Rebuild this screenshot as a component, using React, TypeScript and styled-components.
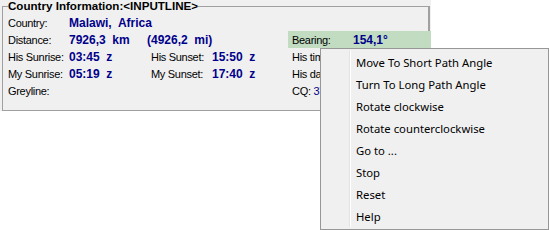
import React from "react";
import styled, { createGlobalStyle } from "styled-components";

const GlobalStyle = createGlobalStyle`
  html, body {
    margin: 0;
    padding: 0;
    background: #ffffff;
  }
  body {
    width: 549px;
    height: 230px;
    overflow: hidden;
    font-family: "Liberation Sans", Arial, sans-serif;
  }
`;

const Screen = styled.div`
  position: relative;
  width: 549px;
  height: 230px;
`;

const Panel = styled.div`
  width: 431px;
  height: 111px;
  background: #f0f0f0;
  box-sizing: border-box;
  padding-left: 2px;
`;

const GroupBox = styled.fieldset`
  margin: 0;
  width: 428px;
  height: 111px;
  box-sizing: border-box;
  padding: 2px 0 0 5px;
  border: 1px solid #a0a0a0;
  border-right-width: 2px;
  min-width: 0;
`;

const Title = styled.legend`
  padding: 0;
  margin: 0;
  font-size: 11.6px;
  line-height: 12px;
  font-weight: bold;
  color: #000000;
  white-space: pre;
`;

const InfoGrid = styled.div`
  display: grid;
  grid-template-columns: 61px 78px 65px 76px 1fr;
  grid-auto-rows: 17px;
  font-size: 11px;
  letter-spacing: -0.3px;
`;

const Label = styled.div<{ $indent?: number }>`
  display: flex;
  align-items: center;
  padding-left: ${({ $indent }) => $indent ?? 0}px;
  color: #000000;
  white-space: pre;
  overflow: hidden;
`;

const Value = styled.div<{ $span?: number }>`
  display: flex;
  align-items: center;
  grid-column: span ${({ $span }) => $span ?? 1};
  font-size: 12px;
  font-weight: bold;
  letter-spacing: 0;
  color: #00008b;
  white-space: pre;
  overflow: hidden;
`;

const Empty = styled.div<{ $span?: number }>`
  grid-column: span ${({ $span }) => $span ?? 1};
`;

const SideCell = styled.div<{ $highlight?: boolean }>`
  display: flex;
  align-items: center;
  padding-left: 4px;
  margin-right: ${({ $highlight }) => ($highlight ? "-3px" : "0")};
  background: ${({ $highlight }) => ($highlight ? "#c1dcc1" : "transparent")};
  white-space: pre;
  overflow: hidden;
`;

const SideLabel = styled.span<{ $width?: number }>`
  width: ${({ $width }) => ($width ? `${$width}px` : "auto")};
  flex: none;
  color: #000000;
`;

const SideValue = styled.span`
  font-size: 12px;
  font-weight: bold;
  letter-spacing: 0;
  color: #00008b;
`;

const CqValue = styled.span`
  color: #00008b;
`;

const Menu = styled.ul`
  position: absolute;
  left: 320px;
  top: 48px;
  width: 229px;
  height: 182px;
  box-sizing: border-box;
  margin: 0;
  padding: 2px 2px;
  list-style: none;
  background: #f0f0f0;
  border: 1px solid #979797;
  font-family: "Noto Sans", "Open Sans", sans-serif;
  font-size: 11.3px;
  color: #000000;

  &::before {
    content: "";
    position: absolute;
    left: 28px;
    top: 2px;
    bottom: 2px;
    width: 1px;
    background: #e3e3e3;
    box-shadow: 1px 0 0 #ffffff;
  }
`;

const MenuItem = styled.li`
  height: 22px;
  display: flex;
  align-items: center;
  padding-left: 33px;
  white-space: nowrap;
`;

const menuItems = [
  "Move To Short Path Angle",
  "Turn To Long Path Angle",
  "Rotate clockwise",
  "Rotate counterclockwise",
  "Go to ...",
  "Stop",
  "Reset",
  "Help",
];

const App: React.FC = () => {
  return (
    <Screen>
      <GlobalStyle />
      <Panel>
        <GroupBox>
          <Title>Country Information:&lt;INPUTLINE&gt;</Title>
          <InfoGrid>
            <Label>Country:</Label>
            <Value $span={3}>Malawi,  Africa</Value>
            <Empty />

            <Label>Distance:</Label>
            <Value>7926,3  km</Value>
            <Value $span={2}>(4926,2  mi)</Value>
            <SideCell $highlight>
              <SideLabel $width={61}>Bearing:</SideLabel>
              <SideValue>154,1°</SideValue>
            </SideCell>

            <Label>His Sunrise:</Label>
            <Value>03:45  z</Value>
            <Label $indent={4}>His Sunset:</Label>
            <Value>15:50  z</Value>
            <SideCell>
              <SideLabel>His time:</SideLabel>
            </SideCell>

            <Label>My Sunrise:</Label>
            <Value>05:19  z</Value>
            <Label $indent={4}>My Sunset:</Label>
            <Value>17:40  z</Value>
            <SideCell>
              <SideLabel>His date:</SideLabel>
            </SideCell>

            <Label>Greyline:</Label>
            <Empty $span={3} />
            <SideCell>
              <SideLabel>CQ: </SideLabel>
              <CqValue>37</CqValue>
            </SideCell>
          </InfoGrid>
        </GroupBox>
      </Panel>

      <Menu>
        {menuItems.map((item) => (
          <MenuItem key={item}>{item}</MenuItem>
        ))}
      </Menu>
    </Screen>
  );
};

export default App;
